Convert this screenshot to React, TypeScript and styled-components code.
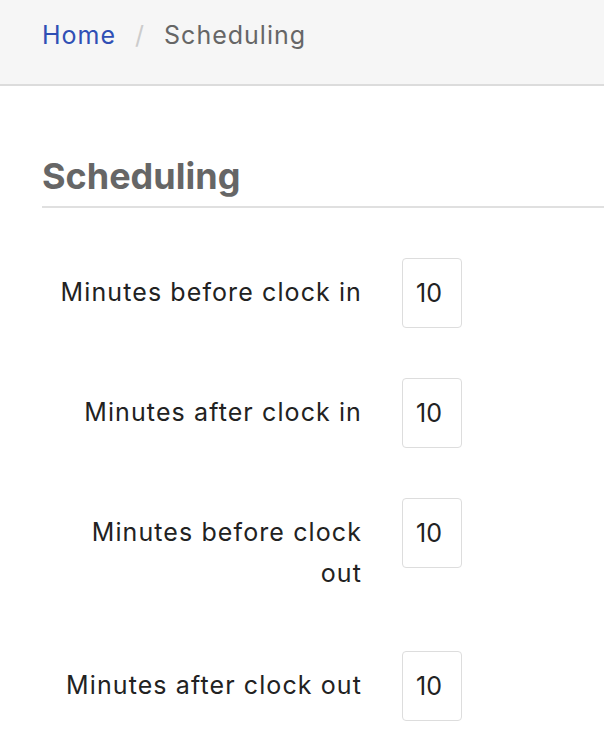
import React from 'react';
import styled, { createGlobalStyle } from 'styled-components';

const GlobalStyle = createGlobalStyle`
  body {
    margin: 0;
    background: #fff;
    font-family: Inter, "Open Sans", sans-serif;
    color: #222;
  }
`;

const Header = styled.nav`
  height: 86px;
  background: #f6f6f6;
  border-bottom: 2px solid #dcdcdc;
  display: flex;
  align-items: flex-start;
  padding: 17px 42px 0;
  box-sizing: border-box;
  font-size: 25px;
  line-height: 36px;
  letter-spacing: 1px;
`;

const Crumb = styled.span<{ $active?: boolean }>`
  color: ${(p) => (p.$active ? '#666' : '#2f4fb5')};
`;

const Sep = styled.span`
  color: #ccc;
  margin: 0 19px;
`;

const Main = styled.main`
  padding: 68px 0 0 42px;
`;

const Title = styled.h1`
  margin: 0;
  font-size: 36px;
  line-height: 44px;
  font-weight: 700;
  color: #666;
  padding-bottom: 8px;
  border-bottom: 2px solid #e0e0e0;
`;

const Form = styled.div`
  padding-top: 50px;
  display: flex;
  flex-direction: column;
  gap: 50px;
`;

const Row = styled.div`
  display: flex;
  align-items: flex-start;
`;

const Label = styled.label`
  width: 306px;
  margin-left: 14px;
  text-align: right;
  font-size: 25px;
  letter-spacing: 1.1px;
  line-height: 41px;
  padding: 14px 0 7px;
  color: #222;
`;

const Field = styled.div`
  margin-left: 40px;
  width: 60px;
  height: 70px;
  border: 1px solid #ddd;
  border-radius: 4px;
  display: flex;
  align-items: center;
  padding-left: 13px;
  box-sizing: border-box;
  font-size: 25px;
  color: #222;
`;

const rows = [
  'Minutes before clock in',
  'Minutes after clock in',
  'Minutes before clock out',
  'Minutes after clock out',
];

export default function App() {
  return (
    <>
      <GlobalStyle />
      <Header>
        <Crumb>Home</Crumb>
        <Sep>/</Sep>
        <Crumb $active>Scheduling</Crumb>
      </Header>
      <Main>
        <Title>Scheduling</Title>
        <Form>
          {rows.map((r) => (
            <Row key={r}>
              <Label>{r}</Label>
              <Field>10</Field>
            </Row>
          ))}
        </Form>
      </Main>
    </>
  );
}
